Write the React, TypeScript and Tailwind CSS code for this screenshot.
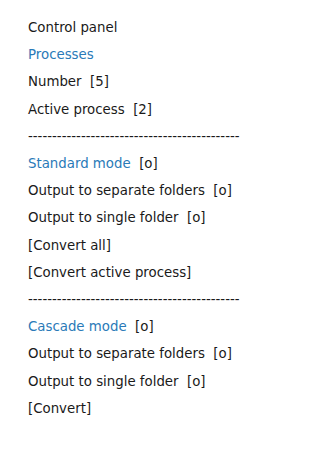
import React from "react";

const Blue = ({ children }: { children: React.ReactNode }) => (
  <span className="text-[#2a7ab8]">{children}</span>
);

export default function App() {
  const dashes = "-".repeat(44);
  return (
    <div className="min-h-[455px] w-[269px] bg-white pl-[28px] pt-[14px] text-[13.33px] leading-[27.2px] text-[#1a1a1a]" style={{ fontFamily: '"DejaVu Sans", sans-serif' }}>
      <div>Control panel</div>
      <div><Blue>Processes</Blue></div>
      <div>Number&nbsp; [5]</div>
      <div>Active process&nbsp; [2]</div>
      <div>{dashes}</div>
      <div><Blue>Standard mode</Blue>&nbsp; [o]</div>
      <div>Output to separate folders&nbsp; [o]</div>
      <div>Output to single folder&nbsp; [o]</div>
      <div>[Convert all]</div>
      <div>[Convert active process]</div>
      <div>{dashes}</div>
      <div><Blue>Cascade mode</Blue>&nbsp; [o]</div>
      <div>Output to separate folders&nbsp; [o]</div>
      <div>Output to single folder&nbsp; [o]</div>
      <div>[Convert]</div>
    </div>
  );
}
